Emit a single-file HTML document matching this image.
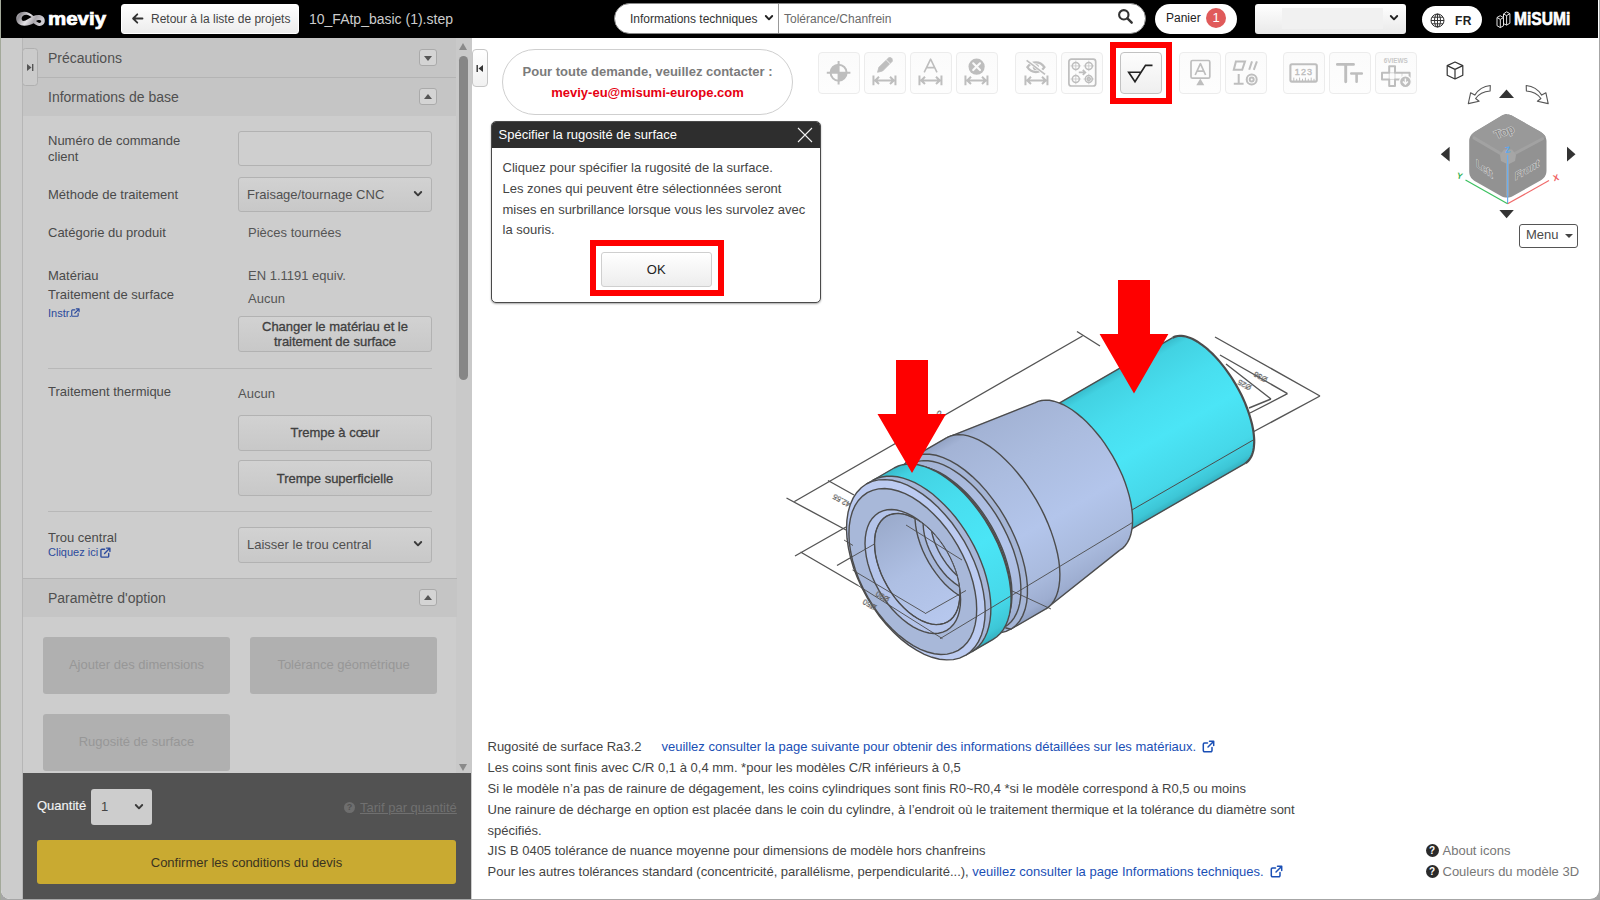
<!DOCTYPE html>
<html lang="fr">
<head>
<meta charset="utf-8">
<title>meviy</title>
<style>
*{box-sizing:border-box;margin:0;padding:0}
html,body{width:1600px;height:900px;overflow:hidden;background:#fff;font-family:"Liberation Sans",sans-serif;color:#333}
.abs{position:absolute}
#frame{position:absolute;left:0;top:0;width:1600px;height:900px;background:linear-gradient(90deg,#a3a99a 0,#a3a99a 1px,#a6a6a6 1px);overflow:hidden}
#win{position:absolute;left:1px;top:0;width:1597.500px;height:898.500px;background:#fff;border-radius:0 0 9px 9px;overflow:hidden}
/* top bar */
#top{position:absolute;left:0;top:0;width:1597px;height:38px;background:#000}
.t12{font-size:12px}
/* left */
#strip{position:absolute;left:0;top:38px;width:21px;height:861px;background:#ccc}
#lp{position:absolute;left:21px;top:38px;width:450px;height:861px;background:#cdcdcd;border-left:1px solid #b6b6b6}
.lbl{position:absolute;font-size:13px;color:#4a4a4a;white-space:nowrap;line-height:16px;margin-top:.6px}
.val{position:absolute;font-size:13px;color:#555;white-space:nowrap;line-height:16px;margin-top:.6px}
.hdr{position:absolute;left:0;width:433.500px;background:#c5c5c5}
.hdr span{position:absolute;left:25px;font-size:14px;color:#505050;white-space:nowrap;line-height:18px}
.tog{position:absolute;left:395.500px;width:18px;height:17px;border:1px solid #aaa;border-radius:3px;background:#d4d4d4}
.tog i{position:absolute;left:4px;width:0;height:0;border-left:4px solid transparent;border-right:4px solid transparent}
.tog i.dn{top:6px;border-top:5px solid #555}
.tog i.up{top:5px;border-bottom:5px solid #555}
.btn{position:absolute;border:1px solid #b2b2b2;border-radius:3px;background:linear-gradient(#d2d2d2,#c8c8c8);font-size:13px;color:#404040;text-align:center;-webkit-text-stroke:0.3px #404040}
.sel{position:absolute;border:1px solid #b2b2b2;border-radius:3px;background:linear-gradient(#d2d2d2,#c8c8c8);font-size:13px;color:#505050;white-space:nowrap}
.dis{position:absolute;background:#b0b0b0;border-radius:3px;font-size:13px;color:#979797;text-align:center;line-height:55px;white-space:nowrap}
.hr{position:absolute;left:25px;width:384px;height:1px;background:#b8b8b8}
/* main */
#main{position:absolute;left:471px;top:38px;width:1126px;height:860px;background:#fff}
.tb{position:absolute;top:14px;width:42px;height:42px;border:1px solid #ececec;border-radius:3px;background:#fafafa}
.note{position:absolute;left:16px;font-size:13px;color:#444;white-space:nowrap;line-height:16px}
.note a{color:#1a4fb5;text-decoration:none}
</style>
</head>
<body>
<div id="frame"><div id="win">

<!-- TOP BAR -->
<div id="top">
  <!-- meviy logo -->
  <svg class="abs" style="left:14px;top:8px" width="34" height="22" viewBox="15 8 34 22">
    <defs><linearGradient id="lg1" x1="0" y1="0" x2="1" y2="0.300"><stop offset="0" stop-color="#c9c6cb"/><stop offset=".18" stop-color="#8d8a90"/><stop offset=".5" stop-color="#e4e2e6"/><stop offset=".75" stop-color="#a9a6ac"/><stop offset="1" stop-color="#cfccd2"/></linearGradient></defs>
    <path d="M24.200 11.800c3.600 0 6.400 1.700 9.200 4.100 1.800-.6 3.800-1 5.900-.8 3.500.4 5.600 2.900 5.500 5.900-.1 2.900-2.400 5-5.300 4.900-2.300-.1-4.100-1.300-5.800-2.700-2.700 1.500-5.700 2.500-9.200 2.500-4.900 0-8.300-2.800-8.300-6.900 0-4 3.300-7 8-7z" fill="url(#lg1)"/>
    <path d="M26.300 14.700c1.900 0 3.700 1 5.300 2.400-1.800.9-3.400 2-5.200 2.900-1.100.6-2.300.9-3 .9-1.200-.2-1.800-1.300-1.800-2.500.1-2.100 2.200-3.700 4.700-3.700z" fill="#000"/>
    <path d="M36.100 21c.9-.6 2.300-1.100 3.400-1 1.200.1 1.800.8 1.700 1.600-.1.800-.8 1.300-1.700 1.300-1.100 0-2.400-.9-3.400-1.900z" fill="#000"/>
  </svg>
  <div class="abs" style="left:46.500px;top:8.500px;font-size:17.500px;font-weight:bold;color:#fff;line-height:21px;transform:scaleX(1.170);transform-origin:0 0;-webkit-text-stroke:0.7px #fff;white-space:nowrap">meviy</div>
  <!-- back button -->
  <div class="abs" style="left:120px;top:4px;width:178px;height:30px;border-radius:3px;background:linear-gradient(#ffffff,#ececec);border:1px solid #fff"></div>
  <svg class="abs" style="left:130px;top:12px" width="13" height="13" viewBox="0 0 13 13"><path d="M11.500 6.500H2.500M6.300 2.300L2.100 6.500l4.200 4.200" fill="none" stroke="#333" stroke-width="1.800" stroke-linecap="round" stroke-linejoin="round"/></svg>
  <div class="abs t12" style="left:150px;top:12px;color:#444;line-height:15px;white-space:nowrap">Retour à la liste de projets</div>
  <div class="abs" style="left:308px;top:10.500px;font-size:14px;color:#ccc;line-height:17px;white-space:nowrap">10_FAtp_basic (1).step</div>
  <!-- search -->
  <div class="abs" style="left:613px;top:3px;width:532px;height:31px;border-radius:16px;background:#fff;border:1px solid #888"></div>
  <div class="abs" style="left:777px;top:4px;width:1px;height:29px;background:#999"></div>
  <div class="abs t12" style="left:629px;top:12px;color:#333;line-height:15px;white-space:nowrap">Informations techniques</div>
  <svg class="abs" style="left:763px;top:14px" width="10" height="8" viewBox="0 0 10 8"><path d="M1.800 2l3.200 3.300L8.200 2" fill="none" stroke="#222" stroke-width="1.900" stroke-linecap="round" stroke-linejoin="round"/></svg>
  <div class="abs t12" style="left:783px;top:12px;color:#6a6a6a;line-height:15px;white-space:nowrap">Tolérance/Chanfrein</div>
  <svg class="abs" style="left:1116px;top:8px" width="17" height="17" viewBox="0 0 17 17"><circle cx="6.800" cy="6.800" r="4.700" fill="none" stroke="#333" stroke-width="2.100"/><path d="M10.400 10.400l4.300 4.300" stroke="#333" stroke-width="2.400" stroke-linecap="round"/></svg>
  <!-- panier -->
  <div class="abs" style="left:1154px;top:4px;width:82px;height:30px;border-radius:15px;background:#fff"></div>
  <div class="abs t12" style="left:1165px;top:11px;color:#222;line-height:15px;white-space:nowrap">Panier</div>
  <div class="abs" style="left:1205px;top:8px;width:20px;height:20px;border-radius:10px;background:#e05a5a;color:#fff;font-size:13px;line-height:20px;text-align:center">1</div>
  <!-- user select -->
  <div class="abs" style="left:1254px;top:4px;width:151px;height:30px;border-radius:3px;background:linear-gradient(#ffffff,#e9e9e9)"></div>
  <div class="abs" style="left:1281px;top:8px;width:101px;height:21px;background:#f1f1f1"></div>
  <svg class="abs" style="left:1388px;top:14px" width="10" height="8" viewBox="0 0 10 8"><path d="M1.800 2l3.200 3.300L8.200 2" fill="none" stroke="#222" stroke-width="1.900" stroke-linecap="round" stroke-linejoin="round"/></svg>
  <!-- FR -->
  <div class="abs" style="left:1421px;top:6px;width:60px;height:27px;border-radius:14px;background:#fff"></div>
  <svg class="abs" style="left:1428.500px;top:13.300px" width="15" height="15" viewBox="0 0 15 15"><g fill="none" stroke="#333" stroke-width="1"><circle cx="7.500" cy="7.500" r="6.500"/><ellipse cx="7.500" cy="7.500" rx="3" ry="6.500"/><path d="M7.500 1v13M1 7.500h13M2 4.200h11M2 10.800h11"/></g></svg>
  <div class="abs" style="left:1454px;top:13.500px;font-size:12px;font-weight:bold;color:#222;line-height:15px;letter-spacing:0.4px">FR</div>
  <!-- misumi -->
  <svg class="abs" style="left:1495px;top:11px" width="15" height="18" viewBox="0 0 15 18"><g fill="none" stroke="#e6e6e6" stroke-width="1" stroke-linejoin="round"><path d="M1 6.500l3.200-1.800 3.300 1.900v8.200L4.300 16.600 1 14.700z"/><path d="M1 6.500l3.300 1.900 3.200-1.800M4.300 8.400v8.200"/><path d="M7.500 6.600V3L10.600.800l3.300 1.900v9.500l-3.200 1.900-3.200-1.400"/><path d="M10.600 4.600l3.300-1.900M10.600 4.600v9.500M7.500 3l3.100 1.600"/></g></svg>
  <div class="abs" style="left:1512.500px;top:8.500px;font-size:18px;font-weight:bold;color:#fff;line-height:21px;letter-spacing:0;transform:scaleX(0.865);transform-origin:0 0;-webkit-text-stroke:0.6px #fff;white-space:nowrap">MiSUMi</div>
</div>

<!-- LEFT -->
<div id="strip"></div>
<div id="lp">
<div class="hdr" style="top:0;height:39px"><span style="top:11px">Précautions</span></div>
<div class="abs" style="left:0;top:39px;width:434px;height:1px;background:#b4b4b4"></div>
<div class="hdr" style="top:40px;height:38px"><span style="top:10px">Informations de base</span></div>
<div class="tog" style="top:11px"><i class="dn"></i></div>
<div class="tog" style="top:50px"><i class="up"></i></div>
<div class="abs" style="left:-1px;top:10px;width:16px;height:38px;border:1px solid #b0b0b0;border-radius:3.500px;background:#cbcbcb"></div>
<svg class="abs" style="left:3.200px;top:24.700px" width="9" height="9" viewBox="0 0 9 9"><path d="M1 1l4.500 3.500L1 8z" fill="#555"/><rect x="6" y="1" width="1.400" height="7" fill="#555"/></svg>
<div class="abs" style="left:433px;top:0;width:16px;height:735px;background:#c9c9c9"></div>
<div class="abs" style="left:436.200px;top:18px;width:8.800px;height:324px;border-radius:5px;background:#868686"></div>
<div class="abs" style="left:435.800px;top:4.700px;width:0;height:0;border-left:4.800px solid transparent;border-right:4.800px solid transparent;border-bottom:7px solid #8a8a8a"></div>
<div class="abs" style="left:435.800px;top:725.500px;width:0;height:0;border-left:4.800px solid transparent;border-right:4.800px solid transparent;border-top:7px solid #8a8a8a"></div>
<div class="lbl" style="left:25px;top:94px">Numéro de commande<br>client</div>
<div class="abs" style="left:215px;top:93px;width:194px;height:35px;border:1px solid #b2b2b2;border-radius:3px;background:#cfcfcf"></div>
<div class="lbl" style="left:25px;top:148px">Méthode de traitement</div>
<div class="sel" style="left:215px;top:139px;width:194px;height:35px;line-height:33px;padding-left:8px">Fraisage/tournage CNC</div>
<svg class="abs" style="left:390px;top:152px" width="10" height="8" viewBox="0 0 10 8"><path d="M1.800 2l3.200 3.300L8.200 2" fill="none" stroke="#3a3a3a" stroke-width="1.900" stroke-linecap="round" stroke-linejoin="round"/></svg>
<div class="lbl" style="left:25px;top:186px">Catégorie du produit</div>
<div class="val" style="left:225px;top:186px">Pièces tournées</div>
<div class="lbl" style="left:25px;top:229px">Matériau</div>
<div class="val" style="left:225px;top:229px">EN 1.1191 equiv.</div>
<div class="lbl" style="left:25px;top:248.800px">Traitement de surface</div>
<div class="val" style="left:225px;top:252px">Aucun</div>
<div class="abs" style="left:25px;top:268px;font-size:11px;color:#2b4a9c;line-height:14px">Instr.</div>
<svg class="abs" style="left:48px;top:270px" width="9" height="9" viewBox="0 0 12 12"><path d="M9.500 7v3a1 1 0 0 1-1 1h-6.500a1 1 0 0 1-1-1v-6.500a1 1 0 0 1 1-1h3M7 1.200h3.800V5M10.600 1.400L5 7" fill="none" stroke="#2b4a9c" stroke-width="1.500" stroke-linecap="round" stroke-linejoin="round"/></svg>
<div class="btn" style="left:215px;top:278px;width:194px;height:36px;line-height:15px;padding-top:2px">Changer le matériau et le<br>traitement de surface</div>
<div class="hr" style="top:330px"></div>
<div class="lbl" style="left:25px;top:345px">Traitement thermique</div>
<div class="val" style="left:215px;top:347px">Aucun</div>
<div class="btn" style="left:215px;top:377px;width:194px;height:36px;line-height:34px">Trempe à cœur</div>
<div class="btn" style="left:215px;top:422px;width:194px;height:36px;line-height:35px">Trempe superficielle</div>
<div class="hr" style="top:473px"></div>
<div class="lbl" style="left:25px;top:491px">Trou central</div>
<div class="abs" style="left:25px;top:507.400px;font-size:11px;color:#2b4a9c;line-height:14px;white-space:nowrap">Cliquez ici</div>
<svg class="abs" style="left:77px;top:509px" width="11" height="11" viewBox="0 0 12 12"><path d="M9.500 7v3a1 1 0 0 1-1 1h-6.500a1 1 0 0 1-1-1v-6.500a1 1 0 0 1 1-1h3M7 1.200h3.800V5M10.600 1.400L5 7" fill="none" stroke="#2b4a9c" stroke-width="1.500" stroke-linecap="round" stroke-linejoin="round"/></svg>
<div class="sel" style="left:215px;top:489px;width:194px;height:36px;line-height:34px;padding-left:8px">Laisser le trou central</div>
<svg class="abs" style="left:390px;top:502px" width="10" height="8" viewBox="0 0 10 8"><path d="M1.800 2l3.200 3.300L8.200 2" fill="none" stroke="#3a3a3a" stroke-width="1.900" stroke-linecap="round" stroke-linejoin="round"/></svg>
<div class="abs" style="left:0;top:540px;width:434px;height:1px;background:#b4b4b4"></div>
<div class="hdr" style="top:541px;height:38px"><span style="top:10px">Paramètre d'option</span></div>
<div class="tog" style="top:551px"><i class="up"></i></div>
<div class="dis" style="left:20px;top:599px;width:187px;height:57px">Ajouter des dimensions</div>
<div class="dis" style="left:227px;top:599px;width:187px;height:57px">Tolérance géométrique</div>
<div class="dis" style="left:20px;top:676px;width:187px;height:57px">Rugosité de surface</div>
<div class="abs" style="left:0;top:735px;width:448px;height:130px;background:#525252"></div>
<div class="abs" style="left:14px;top:760px;font-size:13px;color:#f2f2f2;line-height:16px;-webkit-text-stroke:0.15px #f2f2f2">Quantité</div>
<div class="abs" style="left:68px;top:751px;width:61px;height:36px;border-radius:3px;background:#cdcdcd;font-size:13px;color:#444;line-height:35px;padding-left:10px">1</div>
<svg class="abs" style="left:111px;top:765px" width="10" height="8" viewBox="0 0 10 8"><path d="M1.800 2l3.200 3.300L8.200 2" fill="none" stroke="#3a3a3a" stroke-width="1.900" stroke-linecap="round" stroke-linejoin="round"/></svg>
<div class="abs" style="left:321px;top:764px;width:11px;height:11px;border-radius:6px;background:#6e6e6e;color:#525252;font-size:9px;font-weight:bold;line-height:11px;text-align:center">?</div>
<div class="abs" style="left:337px;top:762px;font-size:13px;color:#707070;line-height:15px;text-decoration:underline;white-space:nowrap">Tarif par quantité</div>
<div class="abs" style="left:14px;top:802px;width:419px;height:44px;border-radius:3px;background:#c9aa31;font-size:13px;color:#3a3320;line-height:45.500px;text-align:center">Confirmer les conditions du devis</div>
</div>

<!-- MAIN -->
<div id="main">
<div class="abs" style="left:0.300px;top:11px;width:15.500px;height:38px;border:1px solid #c6c6c6;border-radius:4px;background:linear-gradient(#fff,#f1f1f1)"></div>
<svg class="abs" style="left:3px;top:25.500px" width="9" height="9" viewBox="0 0 9 9"><path d="M8 1L3.500 4.500 8 8z" fill="#333"/><rect x="1.500" y="1" width="1.400" height="7" fill="#333"/></svg>
<div class="abs" style="left:30px;top:11px;width:291px;height:66px;border:1px solid #cfcfcf;border-radius:33px;background:#fff"></div>
<div class="abs" style="left:30px;top:26px;width:291px;text-align:center;font-size:13px;font-weight:bold;color:#7b7b7b;line-height:16px;white-space:nowrap">Pour toute demande, veuillez contacter :</div>
<div class="abs" style="left:30px;top:47px;width:291px;text-align:center;font-size:13px;font-weight:bold;color:#e60012;line-height:16px;white-space:nowrap">meviy-eu@misumi-europe.com</div>
<div class="abs" style="left:638px;top:4px;width:62px;height:62px;border:6px solid #f00"></div>
<div class="abs" style="left:346px;top:14px;width:42px;height:42px;border-radius:4px;border:1px solid #ececec;background:linear-gradient(#fbfbfb,#fdfdfd)"></div>
<svg class="abs" style="left:346px;top:14px" width="41" height="41" viewBox="0 0 41 41"><g stroke="#bebebe" stroke-width="2" fill="none"><circle cx="20.600" cy="20.700" r="8"/><path d="M8.800 20.700h23.600M20.600 8.900v23.600"/></g><path d="M20.600 20.700V12.700A8 8 0 0 0 12.600 20.700zM20.600 20.700V28.700A8 8 0 0 0 28.600 20.700z" fill="#bebebe"/></svg>
<div class="abs" style="left:392px;top:14px;width:42px;height:42px;border-radius:4px;border:1px solid #ececec;background:linear-gradient(#fbfbfb,#fdfdfd)"></div>
<svg class="abs" style="left:392px;top:14px" width="41" height="41" viewBox="0 0 41 41"><path d="M13.500 20.300L14.900 15.300 24.700 5.800Q26.600 5 27.600 6.200T28.300 9.300L18.600 19z" fill="#bebebe" stroke="#bebebe" stroke-width=".8" stroke-linejoin="round"/><path d="M22.200 7.800l4.100 4.100" stroke="#fbfbfb" stroke-width=".8"/><g fill="none" stroke="#bebebe" stroke-width="2"><path d="M9.450 23.500v9.800M31.450 23.500v9.800M11.500 28.400h18M15 24.800l-3.800 3.600 3.800 3.600M26 24.800l3.800 3.600-3.800 3.600"/></g></svg>
<div class="abs" style="left:438px;top:14px;width:42px;height:42px;border-radius:4px;border:1px solid #ececec;background:linear-gradient(#fbfbfb,#fdfdfd)"></div>
<svg class="abs" style="left:438px;top:14px" width="41" height="41" viewBox="0 0 41 41"><path d="M14.200 20.300L20.600 7.200l6.400 13.100M16.600 15.600h8" fill="none" stroke="#bebebe" stroke-width="1.600" stroke-linejoin="round"/><g fill="none" stroke="#bebebe" stroke-width="2"><path d="M9.450 23.500v9.800M31.450 23.500v9.800M11.500 28.400h18M15 24.800l-3.800 3.600 3.800 3.600M26 24.800l3.800 3.600-3.800 3.600"/></g></svg>
<div class="abs" style="left:484px;top:14px;width:42px;height:42px;border-radius:4px;border:1px solid #ececec;background:linear-gradient(#fbfbfb,#fdfdfd)"></div>
<svg class="abs" style="left:484px;top:14px" width="41" height="41" viewBox="0 0 41 41"><circle cx="20.600" cy="14.700" r="8.100" fill="#bebebe"/><path d="M17.200 11.300l6.800 6.800M24 11.300l-6.800 6.800" stroke="#fafafa" stroke-width="2.100" stroke-linecap="round"/><g fill="none" stroke="#bebebe" stroke-width="2"><path d="M9.450 23.500v9.800M31.450 23.500v9.800M11.500 28.400h18M15 24.800l-3.800 3.600 3.800 3.600M26 24.800l3.800 3.600-3.800 3.600"/></g></svg>
<div class="abs" style="left:543px;top:14px;width:42px;height:42px;border-radius:4px;border:1px solid #ececec;background:linear-gradient(#fbfbfb,#fdfdfd)"></div>
<svg class="abs" style="left:543.6px;top:14px" width="41" height="41" viewBox="0 0 41 41"><g fill="none" stroke="#bebebe" stroke-width="2.300"><path d="M11.400 15.200c2.200-3.300 5.300-4.900 8.500-4.900s6.300 1.600 8.500 4.900c-2.200 3.300-5.300 4.900-8.500 4.900s-6.300-1.600-8.500-4.900z"/></g><circle cx="19.900" cy="15.200" r="3.100" fill="#bebebe"/><path d="M10.200 7.400l19 14.800" stroke="#fbfbfb" stroke-width="3.600"/><path d="M10.600 8.300l18.400 14" stroke="#bebebe" stroke-width="1.600"/><g fill="none" stroke="#bebebe" stroke-width="2"><path d="M9.450 23.500v9.800M31.450 23.500v9.800M11.500 28.400h18M15 24.800l-3.800 3.600 3.800 3.600M26 24.800l3.800 3.600-3.800 3.600"/></g></svg>
<div class="abs" style="left:589px;top:14px;width:42px;height:42px;border-radius:4px;border:1px solid #ececec;background:linear-gradient(#fbfbfb,#fdfdfd)"></div>
<svg class="abs" style="left:589.6px;top:14px" width="41" height="41" viewBox="0 0 41 41"><g fill="none" stroke="#bebebe"><rect x="6.900" y="7.200" width="26.800" height="26.800" rx="2.500" stroke-width="1.700"/><g stroke-width="1.500"><circle cx="13.800" cy="13.900" r="3.500"/><circle cx="26.800" cy="13.900" r="3.500"/><circle cx="13.800" cy="27" r="3.500"/><circle cx="26.800" cy="27" r="3.500"/><circle cx="26.800" cy="27" r="1.500"/></g><g stroke-width=".7"><path d="M8.500 13.900h10.600M21.500 13.900h10.600M8.500 27h10.600M21.500 27h10.600M13.800 8.600v10.600M26.800 8.600v10.600M13.800 21.700v10.600M26.800 21.700v10.600"/></g><path d="M16.800 20.400h6.400M20.800 17.900l2.600 2.500-2.600 2.500" stroke-width="1.700"/></g></svg>
<div class="abs" style="left:648px;top:14px;width:42px;height:42px;border-radius:4px;border:1px solid #c2c2c2;background:linear-gradient(#fdfdfd,#efefef)"></div>
<svg class="abs" style="left:648px;top:14px" width="41" height="41" viewBox="0 0 41 41"><path d="M21.300 20.200H8.700L15 29.700 25.500 13.300h7" fill="none" stroke="#222" stroke-width="1.650" stroke-linejoin="miter"/></svg>
<div class="abs" style="left:707px;top:14px;width:42px;height:42px;border-radius:4px;border:1px solid #ececec;background:linear-gradient(#fbfbfb,#fdfdfd)"></div>
<svg class="abs" style="left:707.6px;top:14px" width="41" height="41" viewBox="0 0 41 41"><rect x="11" y="8.500" width="18.800" height="17.700" rx="1.500" fill="none" stroke="#bebebe" stroke-width="1.700"/><path d="M15.200 23l5.200-11.300L25.600 23M17.200 19.200h6.400" fill="none" stroke="#bebebe" stroke-width="1.700" stroke-linejoin="round"/><path d="M20.300 26.600l-4 6.600h8z" fill="#bebebe"/></svg>
<div class="abs" style="left:753px;top:14px;width:42px;height:42px;border-radius:4px;border:1px solid #ececec;background:linear-gradient(#fbfbfb,#fdfdfd)"></div>
<svg class="abs" style="left:753px;top:14px" width="41" height="41" viewBox="0 0 41 41"><g fill="none" stroke="#bebebe" stroke-width="2"><path d="M10.900 9.400h9.100l-2.800 8.400H8.800zM27 9.400l-2.800 8.400M31.900 9.400l-3.100 8.400M13.700 22v9.800M8.800 31.800h9.800"/><circle cx="26.700" cy="27.600" r="5"/><circle cx="26.700" cy="27.600" r="2"/></g></svg>
<div class="abs" style="left:811px;top:14px;width:42px;height:42px;border-radius:4px;border:1px solid #ececec;background:linear-gradient(#fbfbfb,#fdfdfd)"></div>
<svg class="abs" style="left:811px;top:14px" width="41" height="41" viewBox="0 0 41 41"><rect x="7.400" y="12.300" width="26.400" height="17.300" rx="1.500" fill="none" stroke="#bebebe" stroke-width="2.100"/><path d="M10.800 29v-3.400M13.700 29v-2.200M16.600 29v-3.400M19.500 29v-2.200M22.400 29v-3.400M25.300 29v-2.200M28.200 29v-3.400M31 29v-2.200" stroke="#bebebe" stroke-width="1"/><text x="21" y="23" font-size="9" text-anchor="middle" fill="#bebebe" stroke="#bebebe" stroke-width=".4" font-family="Liberation Sans, sans-serif" letter-spacing="1.200">123</text></svg>
<div class="abs" style="left:857px;top:14px;width:42px;height:42px;border-radius:4px;border:1px solid #ececec;background:linear-gradient(#fbfbfb,#fdfdfd)"></div>
<svg class="abs" style="left:857px;top:14px" width="41" height="41" viewBox="0 0 41 41"><path d="M8.400 12.400h16.100M16.700 12.400v17.300" fill="none" stroke="#bebebe" stroke-width="2.900" stroke-linecap="round"/><path d="M22.300 21.500h10.500M27.600 21.500v8.200" fill="none" stroke="#bebebe" stroke-width="2.600" stroke-linecap="round"/></svg>
<div class="abs" style="left:903px;top:14px;width:42px;height:42px;border-radius:4px;border:1px solid #ececec;background:linear-gradient(#fbfbfb,#fdfdfd)"></div>
<svg class="abs" style="left:903px;top:14px" width="41" height="41" viewBox="0 0 41 41"><text x="20.800" y="10.800" font-size="6.400" font-weight="bold" text-anchor="middle" fill="#c9c9c9" font-family="Liberation Sans, sans-serif">6VIEWS</text><path d="M14.200 14.200h5.800v6.600h14.600v6.600H20v6.600h-5.800v-6.600H7v-6.600h7.200z" fill="none" stroke="#bebebe" stroke-width="2" stroke-linejoin="round"/><path d="M14.200 20.800H20M14.200 27.400H20M14.200 20.800v6.600M20 20.800v6.600M27 20.800v6.600" stroke="#bebebe" stroke-width=".6"/><circle cx="30.400" cy="29.700" r="5.900" fill="#bebebe" stroke="#fbfbfb" stroke-width="1.300"/><path d="M30.400 26.400v5M27.900 29.500l2.500 2.700 2.500-2.700" fill="none" stroke="#fafafa" stroke-width="1.500"/></svg>
<!--MODEL_START-->
<svg class="abs" style="left:288px;top:232px" width="620" height="420" viewBox="760 270 620 420">
<defs>
<linearGradient id="gb" gradientUnits="userSpaceOnUse" x1="863.3" y1="485.8" x2="962.3" y2="657.2"><stop offset="0" stop-color="#93a3c4"/><stop offset="0.05" stop-color="#a3b3d5"/><stop offset="0.3" stop-color="#abbcdf"/><stop offset="0.62" stop-color="#b3c5eb"/><stop offset="0.85" stop-color="#a9badd"/><stop offset="0.96" stop-color="#9dadd0"/><stop offset="1" stop-color="#8f9fc0"/></linearGradient>
<linearGradient id="gc" gradientUnits="userSpaceOnUse" x1="863.3" y1="485.8" x2="962.3" y2="657.2"><stop offset="0" stop-color="#38bccc"/><stop offset="0.06" stop-color="#42d2e2"/><stop offset="0.3" stop-color="#48deef"/><stop offset="0.55" stop-color="#4be5f6"/><stop offset="0.85" stop-color="#46d8e9"/><stop offset="0.96" stop-color="#3dc6d6"/><stop offset="1" stop-color="#35b0c0"/></linearGradient>
<linearGradient id="gc2" gradientUnits="userSpaceOnUse" x1="1172.7" y1="337.7" x2="1245.2" y2="463.3"><stop offset="0" stop-color="#38bccc"/><stop offset="0.06" stop-color="#42d2e2"/><stop offset="0.3" stop-color="#48deef"/><stop offset="0.55" stop-color="#4be5f6"/><stop offset="0.85" stop-color="#46d8e9"/><stop offset="0.96" stop-color="#3dc6d6"/><stop offset="1" stop-color="#35b0c0"/></linearGradient>
<linearGradient id="gh" gradientUnits="userSpaceOnUse" x1="881.8" y1="517.8" x2="943.8" y2="625.2"><stop offset="0" stop-color="#9aaacb"/><stop offset="0.5" stop-color="#aebfe3"/><stop offset="1" stop-color="#b7c8ee"/></linearGradient>
</defs>
<path d="M794.5 501.5 L1082.5 336.0 M1077.0 331.5 L1100.0 346.0 M786.5 498.0 L846.0 530.0 M828.0 480.5 L854.0 495.0 M795.0 556.0 L846.0 527.0 M800.5 552.0 L858.0 585.5 M837.0 565.5 L850.0 558.0 M1215.0 337.0 L1320.0 396.0 M1220.0 355.0 L1287.5 393.7 M1226.0 364.0 L1271.0 399.0 M1320.0 396.0 L1252.0 432.5 M1287.5 393.7 L1250.0 413.0 M1271.0 399.0 L1249.0 408.0" fill="none" stroke="#555" stroke-width="1.400"/>
<path d="M1172.7 337.7 L1176.0 336.4 L1179.6 335.8 L1183.7 336.1 L1188.0 337.2 L1192.7 339.0 L1197.5 341.7 L1202.4 345.1 L1207.5 349.2 L1212.6 353.9 L1217.6 359.2 L1222.5 365.1 L1227.2 371.3 L1231.8 378.0 L1236.0 384.9 L1239.9 392.0 L1243.4 399.3 L1246.4 406.5 L1249.0 413.7 L1251.1 420.7 L1252.7 427.5 L1253.7 433.9 L1254.2 439.9 L1254.0 445.4 L1253.4 450.3 L1252.1 454.6 L1250.3 458.2 L1248.0 461.1 L1245.2 463.3 L1242.0 464.6 L1238.3 465.2 L1234.3 464.9 L1229.9 463.8 L1225.3 462.0 L1220.5 459.3 L1215.5 455.9 L1210.5 451.8 L1205.4 447.1 L1200.4 441.8 L1195.5 435.9 L1190.7 429.7 L1186.2 423.0 L1182.0 416.1 L1178.1 409.0 L1174.6 401.7 L1171.5 394.5 L1168.9 387.3 L1166.8 380.3 L1165.3 373.5 L1164.3 367.1 L1163.8 361.1 L1163.9 355.6 L1164.6 350.7 L1165.8 346.4 L1167.6 342.8 L1169.9 339.9 L1172.7 337.7Z" fill="url(#gc2)"/>
<path d="M1041.1 413.7 L1172.7 337.7 L1245.2 463.3 L1113.6 539.3Z" fill="url(#gc2)" stroke="url(#gc2)" stroke-width=".6"/>
<path d="M1041.1 413.7 L1044.7 412.2 L1048.7 411.4 L1053.1 411.5 L1057.8 412.4 L1062.7 414.1 L1067.8 416.6 L1073.0 419.8 L1078.3 423.7 L1083.6 428.4 L1088.8 433.6 L1093.8 439.3 L1098.7 445.6 L1103.2 452.2 L1107.5 459.1 L1111.4 466.2 L1114.8 473.5 L1117.8 480.8 L1120.2 488.1 L1122.1 495.2 L1123.5 502.0 L1124.3 508.6 L1124.5 514.7 L1124.1 520.4 L1123.1 525.5 L1121.5 530.0 L1119.4 533.8 L1116.7 536.9 L1113.6 539.3 L1110.0 540.8 L1106.0 541.6 L1101.6 541.5 L1096.9 540.6 L1092.0 538.9 L1086.9 536.4 L1081.7 533.2 L1076.4 529.3 L1071.1 524.6 L1065.9 519.4 L1060.9 513.7 L1056.0 507.4 L1051.5 500.8 L1047.2 493.9 L1043.3 486.8 L1039.9 479.5 L1036.9 472.2 L1034.5 464.9 L1032.5 457.8 L1031.2 451.0 L1030.4 444.4 L1030.2 438.3 L1030.6 432.6 L1031.6 427.5 L1033.2 423.0 L1035.3 419.2 L1037.9 416.1 L1041.1 413.7Z" fill="url(#gc2)"/>
<path d="M1041.1 413.7 L1172.7 337.7 M1113.6 539.3 L1245.2 463.3" fill="none" stroke="#4c4c4c" stroke-width="1.400"/>
<path d="M1172.7 337.7 L1174.3 336.9 L1176.0 336.4 L1177.8 336.0 L1179.6 335.8 L1181.6 335.9 L1183.7 336.1 L1185.8 336.5 L1188.0 337.2 L1190.3 338.0 L1192.7 339.0 L1195.0 340.3 L1197.5 341.7 L1199.9 343.3 L1202.4 345.1 L1205.0 347.0 L1207.5 349.2 L1210.0 351.5 L1212.6 353.9 L1215.1 356.5 L1217.6 359.2 L1220.1 362.1 L1222.5 365.1 L1224.9 368.1 L1227.2 371.3 L1229.5 374.6 L1231.8 378.0 L1233.9 381.4 L1236.0 384.9 L1238.0 388.5 L1239.9 392.0 L1241.7 395.6 L1243.4 399.3 L1245.0 402.9 L1246.4 406.5 L1247.8 410.1 L1249.0 413.7 L1250.1 417.2 L1251.1 420.7 L1252.0 424.1 L1252.7 427.5 L1253.3 430.7 L1253.7 433.9 L1254.0 436.9 L1254.2 439.9 L1254.2 442.7 L1254.0 445.4 L1253.8 447.9 L1253.4 450.3 L1252.8 452.5 L1252.1 454.6 L1251.3 456.5 L1250.3 458.2 L1249.2 459.8 L1248.0 461.1 L1246.7 462.3 L1245.2 463.3" fill="none" stroke="#4c4c4c" stroke-width="2.2"/>
<path d="M1124.5 514.3 L1254.1 439.5" stroke="#4c4c4c" stroke-width="1" fill="none"/>
<path d="M1034.8 402.9 L1039.1 401.1 L1043.8 400.2 L1048.9 400.3 L1054.4 401.3 L1060.2 403.3 L1066.1 406.2 L1072.3 410.0 L1078.5 414.7 L1084.7 420.1 L1090.7 426.2 L1096.7 432.9 L1102.3 440.2 L1107.7 448.0 L1112.7 456.1 L1117.2 464.5 L1121.2 473.0 L1124.7 481.6 L1127.6 490.1 L1129.9 498.4 L1131.5 506.4 L1132.4 514.1 L1132.6 521.3 L1132.1 528.0 L1131.0 534.0 L1129.1 539.2 L1126.6 543.7 L1123.5 547.4 L1119.8 550.1 L1115.6 551.9 L1110.9 552.8 L1105.8 552.7 L1100.3 551.7 L1094.5 549.7 L1088.5 546.8 L1082.4 543.0 L1076.2 538.3 L1070.0 532.9 L1064.0 526.8 L1058.0 520.1 L1052.4 512.8 L1047.0 505.0 L1042.0 496.9 L1037.5 488.5 L1033.4 480.0 L1030.0 471.4 L1027.1 462.9 L1024.8 454.6 L1023.2 446.6 L1022.3 438.9 L1022.1 431.7 L1022.6 425.0 L1023.7 419.0 L1025.6 413.8 L1028.0 409.3 L1031.2 405.6 L1034.8 402.9Z" fill="url(#gb)"/>
<path d="M946.4 437.8 L1034.8 402.9 L1119.8 550.1 L1045.4 609.2Z" fill="url(#gb)" stroke="url(#gb)" stroke-width=".6"/>
<path d="M946.4 437.8 L951.3 435.7 L956.7 434.7 L962.6 434.9 L968.9 436.1 L975.6 438.5 L982.5 441.9 L989.6 446.4 L996.7 451.8 L1003.9 458.1 L1010.9 465.3 L1017.8 473.1 L1024.4 481.6 L1030.6 490.7 L1036.4 500.1 L1041.7 509.9 L1046.4 519.8 L1050.5 529.8 L1053.9 539.6 L1056.5 549.3 L1058.4 558.7 L1059.6 567.6 L1059.9 576.0 L1059.4 583.7 L1058.1 590.6 L1056.0 596.7 L1053.2 601.9 L1049.7 606.1 L1045.4 609.2 L1040.6 611.3 L1035.2 612.3 L1029.3 612.1 L1023.0 610.9 L1016.3 608.5 L1009.4 605.1 L1002.3 600.6 L995.2 595.2 L988.0 588.9 L981.0 581.7 L974.1 573.9 L967.5 565.4 L961.3 556.3 L955.5 546.9 L950.2 537.1 L945.5 527.2 L941.4 517.2 L938.0 507.4 L935.3 497.7 L933.4 488.3 L932.3 479.4 L932.0 471.0 L932.5 463.3 L933.8 456.4 L935.9 450.3 L938.7 445.1 L942.2 440.9 L946.4 437.8Z" fill="url(#gb)"/>
<path d="M946.4 437.8 L1034.8 402.9 M1045.4 609.2 L1119.8 550.1" fill="none" stroke="#4c4c4c" stroke-width="1.400"/>
<path d="M1034.8 402.9 L1038.1 401.4 L1041.6 400.5 L1045.4 400.1 L1049.5 400.3 L1053.8 401.2 L1058.2 402.6 L1062.8 404.5 L1067.5 407.0 L1072.3 410.0 L1077.1 413.6 L1081.9 417.6 L1086.7 422.0 L1091.4 426.9 L1096.0 432.2 L1100.5 437.7 L1104.8 443.6 L1108.8 449.8 L1112.7 456.1 L1116.2 462.6 L1119.5 469.2 L1122.5 475.8 L1125.1 482.5 L1127.3 489.1 L1129.2 495.6 L1130.7 502.0 L1131.7 508.2 L1132.4 514.1 L1132.6 519.8 L1132.4 525.1 L1131.8 530.0 L1130.8 534.6 L1129.4 538.7 L1127.5 542.3 L1125.3 545.5 L1122.8 548.1 L1119.8 550.1" fill="none" stroke="#4c4c4c" stroke-width="1.400"/>
<path d="M946.4 437.8 L951.3 435.7 L956.7 434.7 L962.6 434.9 L968.9 436.1 L975.6 438.5 L982.5 441.9 L989.6 446.4 L996.7 451.8 L1003.9 458.1 L1010.9 465.3 L1017.8 473.1 L1024.4 481.6 L1030.6 490.7 L1036.4 500.1 L1041.7 509.9 L1046.4 519.8 L1050.5 529.8 L1053.9 539.6 L1056.5 549.3 L1058.4 558.7 L1059.6 567.6 L1059.9 576.0 L1059.4 583.7 L1058.1 590.6 L1056.0 596.7 L1053.2 601.9 L1049.7 606.1 L1045.4 609.2 L1040.6 611.3 L1035.2 612.3 L1029.3 612.1 L1023.0 610.9 L1016.3 608.5 L1009.4 605.1 L1002.3 600.6 L995.2 595.2 L988.0 588.9 L981.0 581.7 L974.1 573.9 L967.5 565.4 L961.3 556.3 L955.5 546.9 L950.2 537.1 L945.5 527.2 L941.4 517.2 L938.0 507.4 L935.3 497.7 L933.4 488.3 L932.3 479.4 L932.0 471.0 L932.5 463.3 L933.8 456.4 L935.9 450.3 L938.7 445.1 L942.2 440.9 L946.4 437.8Z" fill="url(#gb)"/>
<path d="M911.8 457.8 L946.4 437.8 L1045.4 609.2 L1010.8 629.2Z" fill="url(#gb)" stroke="url(#gb)" stroke-width=".6"/>
<path d="M911.8 457.8 L917.0 455.5 L922.8 454.3 L929.1 454.2 L935.8 455.2 L942.8 457.4 L950.0 460.6 L957.4 464.9 L964.8 470.2 L972.2 476.4 L979.4 483.4 L986.4 491.2 L993.1 499.7 L999.4 508.7 L1005.3 518.1 L1010.5 527.9 L1015.2 537.8 L1019.1 547.9 L1022.4 557.8 L1024.9 567.6 L1026.5 577.1 L1027.4 586.2 L1027.4 594.7 L1026.6 602.6 L1025.0 609.7 L1022.5 616.0 L1019.3 621.4 L1015.4 625.9 L1010.8 629.2 L1005.6 631.5 L999.8 632.7 L993.5 632.8 L986.8 631.8 L979.8 629.6 L972.6 626.4 L965.2 622.1 L957.8 616.8 L950.4 610.6 L943.2 603.6 L936.1 595.8 L929.4 587.3 L923.1 578.3 L917.3 568.9 L912.1 559.1 L907.4 549.2 L903.4 539.1 L900.2 529.2 L897.7 519.4 L896.1 509.9 L895.2 500.8 L895.2 492.3 L896.0 484.4 L897.6 477.3 L900.1 471.0 L903.3 465.6 L907.2 461.1 L911.8 457.8Z" fill="url(#gb)"/>
<path d="M911.8 457.8 L946.4 437.8 M1010.8 629.2 L1045.4 609.2" fill="none" stroke="#4c4c4c" stroke-width="1.400"/>
<path d="M946.4 437.8 L950.2 436.1 L954.2 435.0 L958.6 434.6 L963.3 434.9 L968.2 435.9 L973.3 437.6 L978.6 439.9 L984.0 442.8 L989.6 446.4 L995.1 450.5 L1000.7 455.2 L1006.2 460.4 L1011.7 466.1 L1017.0 472.2 L1022.2 478.7 L1027.2 485.6 L1031.9 492.8 L1036.4 500.1 L1040.6 507.7 L1044.4 515.4 L1047.8 523.1 L1050.9 530.9 L1053.5 538.6 L1055.7 546.1 L1057.5 553.5 L1058.8 560.7 L1059.6 567.6 L1059.9 574.2 L1059.7 580.3 L1059.0 586.1 L1057.9 591.3 L1056.3 596.1 L1054.2 600.3 L1051.7 603.9 L1048.8 606.9 L1045.4 609.2" fill="none" stroke="#4c4c4c" stroke-width="1.400"/>
<path d="M911.8 457.8 L917.0 455.5 L922.8 454.3 L929.1 454.2 L935.8 455.2 L942.8 457.4 L950.0 460.6 L957.4 464.9 L964.8 470.2 L972.2 476.4 L979.4 483.4 L986.4 491.2 L993.1 499.7 L999.4 508.7 L1005.3 518.1 L1010.5 527.9 L1015.2 537.8 L1019.1 547.9 L1022.4 557.8 L1024.9 567.6 L1026.5 577.1 L1027.4 586.2 L1027.4 594.7 L1026.6 602.6 L1025.0 609.7 L1022.5 616.0 L1019.3 621.4 L1015.4 625.9 L1010.8 629.2 L1005.6 631.5 L999.8 632.7 L993.5 632.8 L986.8 631.8 L979.8 629.6 L972.6 626.4 L965.2 622.1 L957.8 616.8 L950.4 610.6 L943.2 603.6 L936.1 595.8 L929.4 587.3 L923.1 578.3 L917.3 568.9 L912.1 559.1 L907.4 549.2 L903.4 539.1 L900.2 529.2 L897.7 519.4 L896.1 509.9 L895.2 500.8 L895.2 492.3 L896.0 484.4 L897.6 477.3 L900.1 471.0 L903.3 465.6 L907.2 461.1 L911.8 457.8Z" fill="#a5b5d6"/>
<path d="M910.3 463.2 L911.8 457.8 L1010.8 629.2 L1005.3 627.8Z" fill="#a5b5d6" stroke="#a5b5d6" stroke-width=".6"/>
<path d="M910.3 463.2 L915.4 461.0 L921.0 459.8 L927.0 459.7 L933.5 460.7 L940.2 462.8 L947.2 465.9 L954.3 470.0 L961.5 475.0 L968.6 480.9 L975.5 487.7 L982.3 495.2 L988.7 503.3 L994.8 511.9 L1000.4 520.9 L1005.4 530.3 L1009.9 539.9 L1013.7 549.5 L1016.8 559.1 L1019.1 568.5 L1020.7 577.6 L1021.5 586.3 L1021.5 594.5 L1020.7 602.1 L1019.1 609.0 L1016.7 615.0 L1013.6 620.2 L1009.8 624.5 L1005.3 627.8 L1000.3 630.0 L994.7 631.2 L988.6 631.3 L982.2 630.3 L975.4 628.2 L968.5 625.1 L961.3 621.0 L954.2 616.0 L947.1 610.1 L940.1 603.3 L933.4 595.8 L926.9 587.7 L920.9 579.1 L915.3 570.1 L910.3 560.7 L905.8 551.1 L902.0 541.5 L898.9 531.9 L896.6 522.5 L895.0 513.4 L894.2 504.7 L894.2 496.5 L895.0 488.9 L896.6 482.0 L899.0 476.0 L902.1 470.8 L905.9 466.5 L910.3 463.2Z" fill="#a5b5d6"/>
<path d="M910.3 463.2 L911.8 457.8 M1005.3 627.8 L1010.8 629.2" fill="none" stroke="#4c4c4c" stroke-width="1.400"/>
<path d="M897.9 476.5 L900.4 470.3 L903.6 465.1 L907.6 460.8 L912.2 457.5 L917.5 455.3 L923.3 454.2 L929.5 454.2 L936.2 455.3 L943.2 457.6 L950.4 460.8 L957.7 465.1 L965.1 470.4 L972.4 476.6 L979.6 483.6 L986.6 491.4 L993.2 499.8 L999.5 508.7 L1005.3 518.1 L1010.5 527.8 L1015.1 537.7 L1019.1 547.7 L1022.3 557.6 L1024.8 567.3 L1026.5 576.8 L1027.4 585.8 L1027.4 594.3 L1026.7 602.2 L1025.1 609.3 L1022.7 615.6 L1019.6 621.1 L1015.8 625.5 L1011.2 629.0 L1006.1 631.4 L1000.4 632.7 L994.2 632.9 L987.6 631.9" fill="none" stroke="#4c4c4c" stroke-width="1.400"/>
<path d="M910.8 464.1 L915.8 461.9 L921.4 460.7 L927.4 460.6 L933.7 461.6 L940.4 463.6 L947.3 466.7 L954.4 470.8 L961.4 475.7 L968.5 481.6 L975.4 488.3 L982.0 495.7 L988.4 503.7 L994.4 512.2 L999.9 521.2 L1004.9 530.5 L1009.3 539.9 L1013.1 549.5 L1016.1 558.9 L1018.5 568.2 L1020.0 577.3 L1020.8 585.9 L1020.8 594.0 L1020.0 601.5 L1018.4 608.3 L1016.1 614.3 L1013.0 619.5 L1009.2 623.7 L1004.8 626.9 L999.8 629.1 L994.3 630.3 L988.3 630.4 L981.9 629.4 L975.2 627.4 L968.3 624.3 L961.3 620.2 L954.2 615.3 L947.2 609.4 L940.3 602.7 L933.6 595.3 L927.3 587.3 L921.3 578.8 L915.8 569.8 L910.8 560.5 L906.3 551.1 L902.6 541.5 L899.5 532.1 L897.2 522.8 L895.6 513.7 L894.8 505.1 L894.9 497.0 L895.6 489.5 L897.2 482.7 L899.6 476.7 L902.6 471.5 L906.4 467.3 L910.8 464.1Z" fill="url(#gb)"/>
<path d="M901.3 469.6 L910.8 464.1 L1004.8 626.9 L995.3 632.4Z" fill="url(#gb)" stroke="url(#gb)" stroke-width=".6"/>
<path d="M901.3 469.6 L906.4 467.3 L912.1 466.1 L918.1 466.0 L924.6 466.9 L931.4 468.9 L938.4 471.9 L945.5 475.9 L952.6 480.8 L959.7 486.7 L966.7 493.3 L973.4 500.7 L979.8 508.7 L985.8 517.2 L991.3 526.2 L996.3 535.4 L1000.7 544.9 L1004.4 554.5 L1007.4 564.0 L1009.7 573.3 L1011.2 582.3 L1011.9 591.0 L1011.9 599.2 L1011.0 606.7 L1009.3 613.6 L1006.9 619.6 L1003.7 624.8 L999.8 629.1 L995.3 632.4 L990.2 634.7 L984.6 635.9 L978.5 636.0 L972.0 635.1 L965.2 633.1 L958.2 630.1 L951.1 626.1 L944.0 621.2 L936.9 615.3 L930.0 608.7 L923.2 601.3 L916.8 593.3 L910.8 584.8 L905.3 575.8 L900.3 566.6 L895.9 557.1 L892.2 547.5 L889.2 538.0 L886.9 528.7 L885.4 519.7 L884.7 511.0 L884.8 502.8 L885.6 495.3 L887.3 488.4 L889.7 482.4 L892.9 477.2 L896.8 472.9 L901.3 469.6Z" fill="url(#gb)"/>
<path d="M901.3 469.6 L910.8 464.1 M995.3 632.4 L1004.8 626.9" fill="none" stroke="#4c4c4c" stroke-width="1.400"/>
<path d="M910.8 464.1 L914.7 462.3 L918.9 461.1 L923.3 460.6 L928.1 460.7 L933.0 461.5 L938.2 462.9 L943.5 464.9 L948.9 467.5 L954.4 470.8 L959.9 474.6 L965.3 478.9 L970.8 483.8 L976.1 489.1 L981.3 494.8 L986.3 501.0 L991.1 507.4 L995.7 514.2 L999.9 521.2 L1003.8 528.4 L1007.4 535.7 L1010.6 543.1 L1013.5 550.5 L1015.8 557.9 L1017.8 565.2 L1019.3 572.3 L1020.3 579.2 L1020.8 585.9 L1020.9 592.2 L1020.5 598.2 L1019.6 603.9 L1018.2 609.0 L1016.4 613.7 L1014.1 617.8 L1011.4 621.5 L1008.3 624.5 L1004.8 626.9" fill="none" stroke="#4c4c4c" stroke-width="1.400"/>
<path d="M901.3 469.6 L906.4 467.3 L912.1 466.1 L918.1 466.0 L924.6 466.9 L931.4 468.9 L938.4 471.9 L945.5 475.9 L952.6 480.8 L959.7 486.7 L966.7 493.3 L973.4 500.7 L979.8 508.7 L985.8 517.2 L991.3 526.2 L996.3 535.4 L1000.7 544.9 L1004.4 554.5 L1007.4 564.0 L1009.7 573.3 L1011.2 582.3 L1011.9 591.0 L1011.9 599.2 L1011.0 606.7 L1009.3 613.6 L1006.9 619.6 L1003.7 624.8 L999.8 629.1 L995.3 632.4 L990.2 634.7 L984.6 635.9 L978.5 636.0 L972.0 635.1 L965.2 633.1 L958.2 630.1 L951.1 626.1 L944.0 621.2 L936.9 615.3 L930.0 608.7 L923.2 601.3 L916.8 593.3 L910.8 584.8 L905.3 575.8 L900.3 566.6 L895.9 557.1 L892.2 547.5 L889.2 538.0 L886.9 528.7 L885.4 519.7 L884.7 511.0 L884.8 502.8 L885.6 495.3 L887.3 488.4 L889.7 482.4 L892.9 477.2 L896.8 472.9 L901.3 469.6Z" fill="#9fafd0"/>
<path d="M898.1 469.1 L901.3 469.6 L995.3 632.4 L994.1 635.4Z" fill="#9fafd0" stroke="#9fafd0" stroke-width=".6"/>
<path d="M898.1 469.1 L903.4 466.8 L909.2 465.5 L915.4 465.4 L922.0 466.3 L929.0 468.3 L936.1 471.4 L943.4 475.4 L950.7 480.5 L958.0 486.4 L965.1 493.2 L971.9 500.7 L978.5 508.9 L984.6 517.6 L990.3 526.8 L995.4 536.2 L999.8 545.9 L1003.6 555.7 L1006.7 565.4 L1009.0 574.9 L1010.6 584.2 L1011.3 593.0 L1011.2 601.4 L1010.3 609.1 L1008.5 616.1 L1006.0 622.3 L1002.8 627.6 L998.8 632.0 L994.1 635.4 L988.9 637.7 L983.1 639.0 L976.9 639.1 L970.2 638.2 L963.3 636.2 L956.2 633.1 L948.9 629.1 L941.6 624.0 L934.3 618.1 L927.2 611.3 L920.3 603.8 L913.8 595.6 L907.7 586.9 L902.0 577.7 L896.9 568.3 L892.4 558.6 L888.6 548.8 L885.6 539.1 L883.2 529.6 L881.7 520.3 L881.0 511.5 L881.1 503.1 L882.0 495.4 L883.8 488.4 L886.3 482.2 L889.5 476.9 L893.5 472.5 L898.1 469.1Z" fill="#9fafd0"/>
<path d="M898.1 469.1 L901.3 469.6 M994.1 635.4 L995.3 632.4" fill="none" stroke="#4c4c4c" stroke-width="1.400"/>
<path d="M901.3 469.6 L905.2 467.7 L909.5 466.5 L914.0 465.9 L918.8 466.0 L923.9 466.7 L929.1 468.1 L934.5 470.1 L939.9 472.7 L945.5 475.9 L951.0 479.7 L956.6 484.0 L962.0 488.8 L967.4 494.1 L972.6 499.8 L977.7 506.0 L982.5 512.4 L987.0 519.2 L991.3 526.2 L995.2 533.4 L998.8 540.7 L1002.0 548.1 L1004.8 555.5 L1007.1 562.9 L1009.0 570.2 L1010.5 577.4 L1011.5 584.3 L1011.9 591.0 L1011.9 597.4 L1011.5 603.4 L1010.5 609.1 L1009.1 614.3 L1007.2 619.0 L1004.8 623.2 L1002.1 626.9 L998.9 629.9 L995.3 632.4" fill="none" stroke="#4c4c4c" stroke-width="1.400"/>
<path d="M898.1 469.1 L903.4 466.8 L909.2 465.5 L915.4 465.4 L922.0 466.3 L929.0 468.3 L936.1 471.4 L943.4 475.4 L950.7 480.5 L958.0 486.4 L965.1 493.2 L971.9 500.7 L978.5 508.9 L984.6 517.6 L990.3 526.8 L995.4 536.2 L999.8 545.9 L1003.6 555.7 L1006.7 565.4 L1009.0 574.9 L1010.6 584.2 L1011.3 593.0 L1011.2 601.4 L1010.3 609.1 L1008.5 616.1 L1006.0 622.3 L1002.8 627.6 L998.8 632.0 L994.1 635.4 L988.9 637.7 L983.1 639.0 L976.9 639.1 L970.2 638.2 L963.3 636.2 L956.2 633.1 L948.9 629.1 L941.6 624.0 L934.3 618.1 L927.2 611.3 L920.3 603.8 L913.8 595.6 L907.7 586.9 L902.0 577.7 L896.9 568.3 L892.4 558.6 L888.6 548.8 L885.6 539.1 L883.2 529.6 L881.7 520.3 L881.0 511.5 L881.1 503.1 L882.0 495.4 L883.8 488.4 L886.3 482.2 L889.5 476.9 L893.5 472.5 L898.1 469.1Z" fill="#b9c9ee"/>
<path d="M894.1 468.0 L898.1 469.1 L994.1 635.4 L993.1 639.4Z" fill="#b9c9ee" stroke="#b9c9ee" stroke-width=".6"/>
<path d="M894.1 468.0 L899.6 465.5 L905.6 464.2 L912.0 464.1 L918.9 465.0 L926.1 467.1 L933.5 470.2 L941.0 474.4 L948.5 479.6 L956.0 485.7 L963.4 492.7 L970.5 500.4 L977.2 508.9 L983.6 517.9 L989.4 527.3 L994.6 537.0 L999.3 547.0 L1003.2 557.1 L1006.3 567.1 L1008.7 576.9 L1010.3 586.5 L1011.0 595.6 L1010.9 604.3 L1009.9 612.2 L1008.1 619.5 L1005.5 625.9 L1002.1 631.4 L997.9 635.9 L993.1 639.4 L987.7 641.9 L981.7 643.2 L975.2 643.3 L968.4 642.4 L961.2 640.3 L953.8 637.2 L946.3 633.0 L938.7 627.8 L931.2 621.7 L923.9 614.7 L916.8 607.0 L910.0 598.5 L903.7 589.5 L897.9 580.1 L892.6 570.4 L888.0 560.4 L884.1 550.3 L880.9 540.3 L878.6 530.5 L877.0 520.9 L876.3 511.8 L876.4 503.1 L877.4 495.2 L879.2 487.9 L881.8 481.5 L885.2 476.0 L889.3 471.5 L894.1 468.0Z" fill="#b9c9ee"/>
<path d="M894.1 468.0 L898.1 469.1 M993.1 639.4 L994.1 635.4" fill="none" stroke="#4c4c4c" stroke-width="1.400"/>
<path d="M898.1 469.1 L902.2 467.2 L906.5 466.0 L911.2 465.4 L916.1 465.4 L921.3 466.1 L926.6 467.5 L932.1 469.5 L937.7 472.2 L943.4 475.4 L949.1 479.3 L954.8 483.7 L960.4 488.6 L965.8 494.0 L971.2 499.9 L976.3 506.1 L981.3 512.7 L985.9 519.6 L990.3 526.8 L994.3 534.1 L997.9 541.6 L1001.2 549.2 L1004.0 556.7 L1006.4 564.3 L1008.4 571.8 L1009.8 579.1 L1010.8 586.2 L1011.3 593.0 L1011.3 599.6 L1010.8 605.7 L1009.8 611.5 L1008.3 616.8 L1006.3 621.7 L1003.9 626.0 L1001.1 629.7 L997.8 632.9 L994.1 635.4" fill="none" stroke="#4c4c4c" stroke-width="1.400"/>
<path d="M894.1 468.0 L899.6 465.5 L905.6 464.2 L912.0 464.1 L918.9 465.0 L926.1 467.1 L933.5 470.2 L941.0 474.4 L948.5 479.6 L956.0 485.7 L963.4 492.7 L970.5 500.4 L977.2 508.9 L983.6 517.9 L989.4 527.3 L994.6 537.0 L999.3 547.0 L1003.2 557.1 L1006.3 567.1 L1008.7 576.9 L1010.3 586.5 L1011.0 595.6 L1010.9 604.3 L1009.9 612.2 L1008.1 619.5 L1005.5 625.9 L1002.1 631.4 L997.9 635.9 L993.1 639.4 L987.7 641.9 L981.7 643.2 L975.2 643.3 L968.4 642.4 L961.2 640.3 L953.8 637.2 L946.3 633.0 L938.7 627.8 L931.2 621.7 L923.9 614.7 L916.8 607.0 L910.0 598.5 L903.7 589.5 L897.9 580.1 L892.6 570.4 L888.0 560.4 L884.1 550.3 L880.9 540.3 L878.6 530.5 L877.0 520.9 L876.3 511.8 L876.4 503.1 L877.4 495.2 L879.2 487.9 L881.8 481.5 L885.2 476.0 L889.3 471.5 L894.1 468.0Z" fill="url(#gc)"/>
<path d="M872.5 480.5 L894.1 468.0 L993.1 639.4 L971.5 651.9Z" fill="url(#gc)" stroke="url(#gc)" stroke-width=".6"/>
<path d="M872.5 480.5 L878.2 477.9 L884.4 476.5 L891.1 476.1 L898.2 476.9 L905.6 478.9 L913.2 481.9 L920.9 486.0 L928.6 491.1 L936.2 497.1 L943.7 504.1 L950.9 511.8 L957.7 520.1 L964.1 529.1 L969.9 538.5 L975.2 548.3 L979.7 558.3 L983.6 568.4 L986.7 578.5 L988.9 588.4 L990.3 598.0 L990.9 607.3 L990.6 616.0 L989.4 624.1 L987.4 631.4 L984.5 638.0 L980.9 643.6 L976.5 648.3 L971.5 651.9 L965.8 654.5 L959.6 655.9 L952.9 656.3 L945.8 655.5 L938.4 653.5 L930.8 650.5 L923.1 646.4 L915.4 641.3 L907.7 635.3 L900.3 628.3 L893.1 620.6 L886.3 612.3 L879.9 603.3 L874.0 593.9 L868.8 584.1 L864.2 574.1 L860.4 564.0 L857.3 553.9 L855.1 544.0 L853.6 534.4 L853.1 525.1 L853.4 516.4 L854.6 508.3 L856.6 501.0 L859.4 494.4 L863.1 488.8 L867.4 484.1 L872.5 480.5Z" fill="url(#gc)"/>
<path d="M872.5 480.5 L894.1 468.0 M971.5 651.9 L993.1 639.4" fill="none" stroke="#4c4c4c" stroke-width="1.400"/>
<path d="M894.1 468.0 L898.3 466.0 L902.8 464.7 L907.7 464.0 L912.8 464.1 L918.1 464.8 L923.6 466.2 L929.3 468.3 L935.1 471.0 L941.0 474.4 L946.9 478.4 L952.7 482.9 L958.5 488.0 L964.2 493.5 L969.7 499.6 L975.0 506.0 L980.1 512.8 L984.9 519.9 L989.4 527.3 L993.5 534.9 L997.3 542.6 L1000.6 550.4 L1003.6 558.2 L1006.0 566.0 L1008.0 573.7 L1009.5 581.2 L1010.5 588.6 L1011.0 595.6 L1011.0 602.4 L1010.4 608.8 L1009.4 614.7 L1007.8 620.2 L1005.8 625.2 L1003.3 629.7 L1000.3 633.5 L996.9 636.8 L993.1 639.4" fill="none" stroke="#4c4c4c" stroke-width="1.400"/>
<path d="M872.5 480.5 L878.2 477.9 L884.4 476.5 L891.1 476.1 L898.2 476.9 L905.6 478.9 L913.2 481.9 L920.9 486.0 L928.6 491.1 L936.2 497.1 L943.7 504.1 L950.9 511.8 L957.7 520.1 L964.1 529.1 L969.9 538.5 L975.2 548.3 L979.7 558.3 L983.6 568.4 L986.7 578.5 L988.9 588.4 L990.3 598.0 L990.9 607.3 L990.6 616.0 L989.4 624.1 L987.4 631.4 L984.5 638.0 L980.9 643.6 L976.5 648.3 L971.5 651.9 L965.8 654.5 L959.6 655.9 L952.9 656.3 L945.8 655.5 L938.4 653.5 L930.8 650.5 L923.1 646.4 L915.4 641.3 L907.7 635.3 L900.3 628.3 L893.1 620.6 L886.3 612.3 L879.9 603.3 L874.0 593.9 L868.8 584.1 L864.2 574.1 L860.4 564.0 L857.3 553.9 L855.1 544.0 L853.6 534.4 L853.1 525.1 L853.4 516.4 L854.6 508.3 L856.6 501.0 L859.4 494.4 L863.1 488.8 L867.4 484.1 L872.5 480.5Z" fill="#a7b7d9"/>
<path d="M866.3 484.0 L872.5 480.5 L971.5 651.9 L965.3 655.5Z" fill="#a7b7d9" stroke="#a7b7d9" stroke-width=".6"/>
<path d="M866.3 484.0 L872.1 481.4 L878.4 479.9 L885.1 479.6 L892.3 480.3 L899.8 482.2 L907.4 485.2 L915.2 489.3 L922.9 494.4 L930.6 500.4 L938.1 507.3 L945.3 515.0 L952.2 523.3 L958.5 532.3 L964.4 541.7 L969.6 551.5 L974.2 561.5 L978.0 571.6 L981.1 581.7 L983.3 591.6 L984.7 601.3 L985.2 610.5 L984.8 619.3 L983.6 627.4 L981.5 634.8 L978.6 641.4 L974.9 647.1 L970.5 651.8 L965.3 655.5 L959.6 658.1 L953.3 659.6 L946.5 659.9 L939.4 659.2 L931.9 657.3 L924.3 654.3 L916.5 650.2 L908.7 645.1 L901.0 639.1 L893.6 632.2 L886.3 624.5 L879.5 616.2 L873.1 607.2 L867.3 597.8 L862.0 588.0 L857.5 578.0 L853.6 567.9 L850.6 557.8 L848.4 547.9 L847.0 538.2 L846.5 529.0 L846.9 520.2 L848.1 512.1 L850.2 504.7 L853.1 498.1 L856.8 492.4 L861.2 487.7 L866.3 484.0Z" fill="#a7b7d9"/>
<path d="M866.3 484.0 L872.5 480.5 M965.3 655.5 L971.5 651.9" fill="none" stroke="#4c4c4c" stroke-width="1.400"/>
<path d="M872.5 480.5 L876.8 478.4 L881.6 477.0 L886.6 476.2 L891.9 476.2 L897.4 476.8 L903.1 478.1 L908.9 480.1 L914.9 482.7 L920.9 486.0 L926.9 489.9 L932.9 494.3 L938.7 499.4 L944.5 504.9 L950.1 510.9 L955.5 517.3 L960.6 524.1 L965.4 531.2 L969.9 538.5 L974.1 546.1 L977.8 553.8 L981.1 561.7 L984.0 569.5 L986.3 577.3 L988.2 585.1 L989.6 592.7 L990.5 600.1 L990.9 607.3 L990.7 614.1 L990.0 620.6 L988.8 626.6 L987.1 632.2 L984.9 637.3 L982.2 641.9 L979.1 645.8 L975.5 649.2 L971.5 651.9" fill="none" stroke="#4c4c4c" stroke-width="1.400"/>
<path d="M866.3 484.0 L872.1 481.4 L878.4 479.9 L885.1 479.6 L892.3 480.3 L899.8 482.2 L907.4 485.2 L915.2 489.3 L922.9 494.4 L930.6 500.4 L938.1 507.3 L945.3 515.0 L952.2 523.3 L958.5 532.3 L964.4 541.7 L969.6 551.5 L974.2 561.5 L978.0 571.6 L981.1 581.7 L983.3 591.6 L984.7 601.3 L985.2 610.5 L984.8 619.3 L983.6 627.4 L981.5 634.8 L978.6 641.4 L974.9 647.1 L970.5 651.8 L965.3 655.5 L959.6 658.1 L953.3 659.6 L946.5 659.9 L939.4 659.2 L931.9 657.3 L924.3 654.3 L916.5 650.2 L908.7 645.1 L901.0 639.1 L893.6 632.2 L886.3 624.5 L879.5 616.2 L873.1 607.2 L867.3 597.8 L862.0 588.0 L857.5 578.0 L853.6 567.9 L850.6 557.8 L848.4 547.9 L847.0 538.2 L846.5 529.0 L846.9 520.2 L848.1 512.1 L850.2 504.7 L853.1 498.1 L856.8 492.4 L861.2 487.7 L866.3 484.0Z" fill="#bccbf1" stroke="#4c4c4c" stroke-width="1.400"/>
<path d="M867.3 492.7 L872.6 490.3 L878.4 488.9 L884.7 488.5 L891.3 489.2 L898.2 491.0 L905.2 493.7 L912.4 497.4 L919.6 502.1 L926.6 507.6 L933.5 513.9 L940.2 521.0 L946.5 528.7 L952.3 536.9 L957.7 545.6 L962.5 554.6 L966.7 563.8 L970.2 573.0 L973.0 582.3 L975.0 591.5 L976.3 600.4 L976.7 608.9 L976.4 616.9 L975.2 624.4 L973.3 631.3 L970.6 637.3 L967.2 642.6 L963.0 646.9 L958.3 650.3 L953.0 652.7 L947.2 654.1 L940.9 654.5 L934.3 653.8 L927.4 652.0 L920.4 649.3 L913.2 645.6 L906.0 640.9 L899.0 635.4 L892.1 629.1 L885.4 622.0 L879.1 614.3 L873.3 606.1 L867.9 597.4 L863.1 588.4 L858.9 579.2 L855.4 570.0 L852.6 560.7 L850.6 551.5 L849.3 542.6 L848.9 534.1 L849.2 526.1 L850.4 518.6 L852.3 511.7 L855.0 505.7 L858.4 500.4 L862.6 496.1 L867.3 492.7Z" fill="#a8b8d9" stroke="#4c4c4c" stroke-width="1.400"/>
<path d="M878.8 512.6 L882.8 510.8 L887.1 509.8 L891.8 509.5 L896.7 510.0 L901.9 511.3 L907.1 513.4 L912.5 516.2 L917.8 519.6 L923.1 523.8 L928.3 528.5 L933.3 533.8 L938.0 539.5 L942.3 545.6 L946.4 552.1 L950.0 558.8 L953.1 565.7 L955.7 572.7 L957.8 579.6 L959.3 586.4 L960.2 593.1 L960.6 599.4 L960.3 605.5 L959.4 611.1 L958.0 616.1 L956.0 620.7 L953.4 624.6 L950.3 627.8 L946.8 630.4 L942.8 632.2 L938.5 633.2 L933.8 633.5 L928.9 633.0 L923.7 631.7 L918.5 629.6 L913.1 626.8 L907.8 623.4 L902.5 619.2 L897.3 614.5 L892.3 609.2 L887.6 603.5 L883.3 597.4 L879.2 590.9 L875.6 584.2 L872.5 577.3 L869.9 570.3 L867.8 563.4 L866.3 556.6 L865.4 549.9 L865.0 543.6 L865.3 537.5 L866.2 531.9 L867.6 526.9 L869.6 522.3 L872.2 518.4 L875.3 515.2 L878.8 512.6Z" fill="#b4c4ea" stroke="#4c4c4c" stroke-width="1.400"/>
<clipPath id="hc"><path d="M886.6 516.2 L890.2 514.6 L894.0 513.7 L898.2 513.4 L902.6 513.9 L907.2 515.1 L911.9 517.0 L916.7 519.5 L921.4 522.6 L926.2 526.3 L930.8 530.6 L935.2 535.3 L939.4 540.4 L943.4 546.0 L947.0 551.8 L950.2 557.8 L953.0 564.0 L955.4 570.2 L957.3 576.4 L958.6 582.5 L959.5 588.5 L959.8 594.2 L959.6 599.6 L958.8 604.6 L957.6 609.1 L955.8 613.2 L953.5 616.7 L950.8 619.6 L947.6 621.8 L944.1 623.4 L940.2 624.3 L936.1 624.6 L931.7 624.1 L927.1 622.9 L922.4 621.0 L917.6 618.5 L912.8 615.4 L908.1 611.7 L903.5 607.4 L899.0 602.7 L894.8 597.6 L890.9 592.0 L887.3 586.2 L884.1 580.2 L881.2 574.0 L878.9 567.8 L877.0 561.6 L875.6 555.5 L874.8 549.5 L874.5 543.8 L874.7 538.4 L875.4 533.4 L876.7 528.9 L878.5 524.8 L880.8 521.3 L883.5 518.4 L886.6 516.2Z"/></clipPath>
<path d="M886.6 516.2 L890.2 514.6 L894.0 513.7 L898.2 513.4 L902.6 513.9 L907.2 515.1 L911.9 517.0 L916.7 519.5 L921.4 522.6 L926.2 526.3 L930.8 530.6 L935.2 535.3 L939.4 540.4 L943.4 546.0 L947.0 551.8 L950.2 557.8 L953.0 564.0 L955.4 570.2 L957.3 576.4 L958.6 582.5 L959.5 588.5 L959.8 594.2 L959.6 599.6 L958.8 604.6 L957.6 609.1 L955.8 613.2 L953.5 616.7 L950.8 619.6 L947.6 621.8 L944.1 623.4 L940.2 624.3 L936.1 624.6 L931.7 624.1 L927.1 622.9 L922.4 621.0 L917.6 618.5 L912.8 615.4 L908.1 611.7 L903.5 607.4 L899.0 602.7 L894.8 597.6 L890.9 592.0 L887.3 586.2 L884.1 580.2 L881.2 574.0 L878.9 567.8 L877.0 561.6 L875.6 555.5 L874.8 549.5 L874.5 543.8 L874.7 538.4 L875.4 533.4 L876.7 528.9 L878.5 524.8 L880.8 521.3 L883.5 518.4 L886.6 516.2Z" fill="url(#gh)" stroke="#4c4c4c" stroke-width="1.400"/>
<g clip-path="url(#hc)">
<path d="M925.6 493.7 L928.9 492.2 L932.5 491.5 L936.4 491.4 L940.5 492.0 L944.9 493.3 L949.3 495.3 L953.9 498.0 L958.5 501.2 L963.1 505.0 L967.6 509.3 L971.9 514.1 L976.0 519.3 L979.9 524.9 L983.5 530.7 L986.8 536.7 L989.6 542.8 L992.1 549.0 L994.0 555.2 L995.5 561.2 L996.6 567.1 L997.1 572.7 L997.0 577.9 L996.5 582.8 L995.5 587.2 L993.9 591.1 L991.9 594.5 L989.5 597.2 L986.6 599.3 L983.3 600.8 L979.7 601.5 L975.8 601.6 L971.7 601.0 L967.3 599.7 L962.9 597.7 L958.3 595.0 L953.7 591.8 L949.1 588.0 L944.6 583.7 L940.3 578.9 L936.2 573.7 L932.3 568.1 L928.7 562.3 L925.4 556.3 L922.6 550.2 L920.2 544.0 L918.2 537.8 L916.7 531.8 L915.7 525.9 L915.1 520.3 L915.2 515.1 L915.7 510.2 L916.7 505.8 L918.3 501.9 L920.3 498.5 L922.7 495.8 L925.6 493.7Z" fill="#a6b6d8" stroke="#4c4c4c" stroke-width="1.400"/>
<path d="M931.6 504.1 L934.2 502.9 L937.1 502.3 L940.2 502.2 L943.6 502.8 L947.1 503.8 L950.7 505.4 L954.3 507.5 L958.0 510.1 L961.7 513.2 L965.3 516.6 L968.8 520.5 L972.1 524.7 L975.2 529.1 L978.1 533.8 L980.7 538.6 L983.0 543.5 L985.0 548.5 L986.6 553.5 L987.8 558.3 L988.6 563.0 L989.0 567.5 L989.0 571.7 L988.6 575.7 L987.7 579.2 L986.5 582.4 L984.9 585.0 L982.9 587.2 L980.6 588.9 L978.0 590.1 L975.1 590.7 L972.0 590.8 L968.6 590.2 L965.1 589.2 L961.5 587.6 L957.9 585.5 L954.2 582.9 L950.5 579.8 L946.9 576.4 L943.4 572.5 L940.1 568.3 L937.0 563.9 L934.1 559.2 L931.5 554.4 L929.2 549.5 L927.2 544.5 L925.6 539.5 L924.4 534.7 L923.6 530.0 L923.2 525.5 L923.2 521.3 L923.6 517.3 L924.5 513.8 L925.7 510.6 L927.3 508.0 L929.3 505.8 L931.6 504.1Z" fill="#b1c2e8" stroke="#4c4c4c" stroke-width="1.400"/>
<path d="M938.3 503.7 L940.7 502.6 L943.4 502.0 L946.3 502.0 L949.4 502.5 L952.7 503.5 L956.1 505.0 L959.5 507.0 L962.9 509.4 L966.4 512.3 L969.7 515.6 L973.0 519.2 L976.1 523.1 L979.0 527.3 L981.7 531.7 L984.2 536.2 L986.3 540.9 L988.2 545.5 L989.7 550.2 L990.8 554.7 L991.6 559.1 L992.0 563.3 L992.0 567.3 L991.6 571.0 L990.9 574.3 L989.8 577.2 L988.3 579.7 L986.4 581.8 L984.3 583.3 L981.9 584.4 L979.2 585.0 L976.3 585.0 L973.2 584.5 L969.9 583.5 L966.5 582.0 L963.1 580.0 L959.7 577.6 L956.2 574.7 L952.9 571.4 L949.6 567.8 L946.5 563.9 L943.6 559.7 L940.9 555.3 L938.4 550.8 L936.3 546.1 L934.4 541.5 L932.9 536.8 L931.8 532.3 L931.0 527.9 L930.6 523.7 L930.6 519.7 L931.0 516.0 L931.7 512.7 L932.8 509.8 L934.3 507.3 L936.2 505.2 L938.3 503.7Z" fill="#adbee3" stroke="#4c4c4c" stroke-width="1.400"/>
</g>
<path d="M886.6 516.2 L890.2 514.6 L894.0 513.7 L898.2 513.4 L902.6 513.9 L907.2 515.1 L911.9 517.0 L916.7 519.5 L921.4 522.6 L926.2 526.3 L930.8 530.6 L935.2 535.3 L939.4 540.4 L943.4 546.0 L947.0 551.8 L950.2 557.8 L953.0 564.0 L955.4 570.2 L957.3 576.4 L958.6 582.5 L959.5 588.5 L959.8 594.2 L959.6 599.6 L958.8 604.6 L957.6 609.1 L955.8 613.2 L953.5 616.7 L950.8 619.6 L947.6 621.8 L944.1 623.4 L940.2 624.3 L936.1 624.6 L931.7 624.1 L927.1 622.9 L922.4 621.0 L917.6 618.5 L912.8 615.4 L908.1 611.7 L903.5 607.4 L899.0 602.7 L894.8 597.6 L890.9 592.0 L887.3 586.2 L884.1 580.2 L881.2 574.0 L878.9 567.8 L877.0 561.6 L875.6 555.5 L874.8 549.5 L874.5 543.8 L874.7 538.4 L875.4 533.4 L876.7 528.9 L878.5 524.8 L880.8 521.3 L883.5 518.4 L886.6 516.2Z" fill="none" stroke="#4c4c4c" stroke-width="1"/>
<path d="M906.0 525.0 L962.0 560.0 M850.0 558.0 L875.0 543.7 M852.5 570.0 L925.0 613.0 M925.0 613.7 L966.0 590.5 M858.0 585.5 L942.5 638.7 M940.0 638.7 L1132.5 522.5 M1010.0 590.0 L1051.0 609.0 M844.0 540.0 L853.0 545.5" fill="none" stroke="#4c4c4c" stroke-width=".9"/>
<g font-family="Liberation Sans, sans-serif" font-size="7.500" fill="none" stroke="#666" stroke-width=".45"><text transform="translate(1268 378) rotate(208)">Ø36</text><text transform="translate(1252 386) rotate(208)">Ø25</text><text transform="translate(851 503) rotate(210)">42.55</text><text transform="translate(890 598) rotate(210)">Ø30</text><text transform="translate(877 606) rotate(210)">Ø50</text><text transform="translate(942 412) rotate(208)">0</text></g>
<path d="M896 360h32v54h18l-34 59-34.500-59h18.500z" fill="#fe0000"/>
<path d="M1118 280h32v54h18.400l-34.400 59.500-34.400-59.500h18.400z" fill="#fe0000"/>
</svg>
<!--MODEL_END-->
<div class="abs" style="left:19px;top:83px;width:330px;height:182px;border:1px solid #4a4a4a;border-radius:5px;background:#fff;box-shadow:0 1px 2px rgba(0,0,0,.35);overflow:hidden"><div class="abs" style="left:0;top:0;width:330px;height:26px;background:#2e2e2e"></div></div>
<div class="abs" style="left:26.5px;top:89px;font-size:13px;color:#fff;line-height:15px;white-space:nowrap">Spécifier la rugosité de surface</div>
<svg class="abs" style="left:325px;top:89px" width="16" height="16" viewBox="0 0 16 16"><path d="M1 1l14 14M15 1L1 15" stroke="#f2f2f2" stroke-width="1.100"/></svg>
<div class="abs" style="left:30.5px;top:120px;font-size:13px;color:#444;line-height:20.800px;white-space:nowrap">Cliquez pour spécifier la rugosité de la surface.<br>Les zones qui peuvent être sélectionnées seront<br>mises en surbrillance lorsque vous les survolez avec<br>la souris.</div>
<div class="abs" style="left:118px;top:202px;width:134px;height:56px;border:6px solid #f00"></div>
<div class="abs" style="left:129px;top:213.5px;width:110.500px;height:35px;border:1px solid #cfcfcf;border-radius:3px;background:linear-gradient(#ffffff,#ededed);font-size:13px;color:#222;line-height:33px;text-align:center">OK</div>
<svg class="abs" style="left:964px;top:18px" width="150" height="200" viewBox="1436 56 150 200">
<defs><linearGradient id="cg" x1="0" y1="0" x2="0" y2="1"><stop offset="0" stop-color="#a6a6a6"/><stop offset="1" stop-color="#999"/></linearGradient></defs>
<g fill="none" stroke="#333" stroke-width="1.200" stroke-linejoin="round"><path d="M1455 62l7.800 3.600v9.600l-7.800 3.800-7.800-3.800v-9.600z"/><path d="M1447.200 65.600l7.800 3.800 7.800-3.800M1455 69.400V79"/></g>
<g fill="#fff" stroke="#555" stroke-width="1.100" stroke-linejoin="round"><path d="M1490.300 85.500c-6.500.6-12 4-15.500 9.600l-4.200-2.300-2.300 10.800 10.800-2.300-3.500-2.800c3-4.300 8.200-7 14.500-7.500z"/><path d="M1526.200 85.500c6.500.6 12 4 15.500 9.600l4.200-2.300 2.300 10.800-10.800-2.300 3.500-2.800c-3-4.300-8.200-7-14.500-7.500z"/></g>
<g fill="#333"><path d="M1499 98l7.500-8.600 7.500 8.600z"/><path d="M1499.400 210l7.200 8.300 7.200-8.300z"/><path d="M1449.600 146.800v14.800l-8.800-7.400z"/><path d="M1567 146.800v14.800l8.500-7.400z"/></g>
<path d="M1507 114.500c2.500 0 4 .6 6.500 2l26.500 15c3.500 2 6.500 5 6.500 9.500v29.500c0 5-2.500 8-6 10l-27.500 15.500c-3.500 2-8.500 2-12 0l-25.500-14.500c-3.500-2-6.300-5-6.300-10v-30.500c0-4.500 2.800-7.500 6.300-9.500l25-15c2.500-1.400 4-2 6.500-2z" fill="#929292"/>
<path d="M1507 114.500c2.500 0 4 .6 6.500 2l26.500 15c2.500 1.500 4.500 3 5.600 5.500L1512 155h-9l-32.200-19c1-2.200 3-3.600 5.200-5l25-15c2.500-1.400 4-2 6-2z" fill="#999"/><path d="M1474 137.900L1503 155M1542.500 138.700L1512 155M1507.500 164v31" fill="none" stroke="#a2a2a2" stroke-width="3" stroke-linecap="round"/>
<path d="M1504 149.500h8l4 5.500-1 6-7 3.500-7-3.500-1-6z" fill="#a6a6a6"/>
<g font-family="Liberation Sans, sans-serif" font-weight="bold" fill="#8c8c8c" stroke="#d9d9d9" stroke-width=".9" paint-order="stroke">
<text transform="matrix(0.93 -0.36 0.42 0.9 1496.500 139)" font-size="11.500">Top</text>
<text transform="matrix(0.8 0.6 0.05 1 1476.500 166.500)" font-size="11">Left</text>
<text transform="matrix(0.86 -0.5 0 1 1515 180.500)" font-size="11">Front</text></g>
<path d="M1507.600 203.800V155" stroke="#6aaef0" stroke-width="1.200"/><path d="M1507.600 203.800L1549 180.500" stroke="#f06a6a" stroke-width="1.200"/><path d="M1507.600 203.800L1465.500 180" stroke="#3cc060" stroke-width="1.200"/>
<g font-family="Liberation Sans, sans-serif" font-size="8.500" font-weight="bold"><text x="1505" y="152.500" fill="#5aa8f0" transform="rotate(-8 1508 149)">Z</text><text x="1553" y="180.500" fill="#f06060" transform="rotate(-15 1556 177)">X</text><text x="1457" y="179" fill="#30b050" transform="rotate(15 1460 176)">Y</text></g>
</svg>
<div class="abs" style="left:1047px;top:186px;width:59px;height:24px;border:1px solid #555;border-radius:3px;background:#fff"></div>
<div class="abs" style="left:1054px;top:188px;font-size:13px;color:#4a4a4a;line-height:17px">Menu</div>
<div class="abs" style="left:1093px;top:196px;width:0;height:0;border-left:4px solid transparent;border-right:4px solid transparent;border-top:4px solid #444"></div>
<div class="note" style="left:15.5px;top:700.9px">Rugosité de surface Ra3.2<span style="display:inline-block;width:20px"></span><a>veuillez consulter la page suivante pour obtenir des informations détaillées sur les matériaux.</a><svg style="display:inline-block;vertical-align:-2px;margin-left:6px" width="13" height="13" viewBox="0 0 13 13"><path d="M10 7.500v3a1.200 1.200 0 0 1-1.200 1.200H2.500a1.200 1.200 0 0 1-1.200-1.200V4.200A1.200 1.200 0 0 1 2.500 3h3M7.500 1.300h4.200v4.200M11.500 1.500L6 7" fill="none" stroke="#1a4fb5" stroke-width="1.500" stroke-linecap="round" stroke-linejoin="round"/></svg></div>
<div class="note" style="left:15.5px;top:721.9px">Les coins sont finis avec C/R 0,1 à 0,4 mm. *pour les modèles C/R inférieurs à 0,5</div>
<div class="note" style="left:15.5px;top:742.9px">Si le modèle n’a pas de rainure de dégagement, les coins cylindriques sont finis R0~R0,4 *si le modèle correspond à R0,5 ou moins</div>
<div class="note" style="left:15.5px;top:763.9px">Une rainure de décharge en option est placée dans le coin du cylindre, à l’endroit où le traitement thermique et la tolérance du diamètre sont</div>
<div class="note" style="left:15.5px;top:784.6px">spécifiés.</div>
<div class="note" style="left:15.5px;top:804.8px">JIS B 0405 tolérance de nuance moyenne pour dimensions de modèle hors chanfreins</div>
<div class="note" style="left:15.5px;top:825.7px">Pour les autres tolérances standard (concentricité, parallélisme, perpendicularité...), <a>veuillez consulter la page Informations techniques.</a><svg style="display:inline-block;vertical-align:-2px;margin-left:6px" width="13" height="13" viewBox="0 0 13 13"><path d="M10 7.500v3a1.200 1.200 0 0 1-1.200 1.200H2.500a1.200 1.200 0 0 1-1.200-1.200V4.200A1.200 1.200 0 0 1 2.500 3h3M7.500 1.300h4.200v4.200M11.500 1.500L6 7" fill="none" stroke="#1a4fb5" stroke-width="1.500" stroke-linecap="round" stroke-linejoin="round"/></svg></div>
<div class="abs" style="left:953.5px;top:804.8px;font-size:13px;color:#777;line-height:16px;white-space:nowrap"><span style="display:inline-block;width:13px;height:13px;border-radius:7px;background:#2a2a2a;color:#fff;font-size:10px;font-weight:bold;line-height:13px;text-align:center;vertical-align:1px;margin-right:4px">?</span>About icons</div>
<div class="abs" style="left:953.5px;top:825.7px;font-size:13px;color:#777;line-height:16px;white-space:nowrap"><span style="display:inline-block;width:13px;height:13px;border-radius:7px;background:#2a2a2a;color:#fff;font-size:10px;font-weight:bold;line-height:13px;text-align:center;vertical-align:1px;margin-right:4px">?</span>Couleurs du modèle 3D</div>
</div>

</div></div>
</body>
</html>
